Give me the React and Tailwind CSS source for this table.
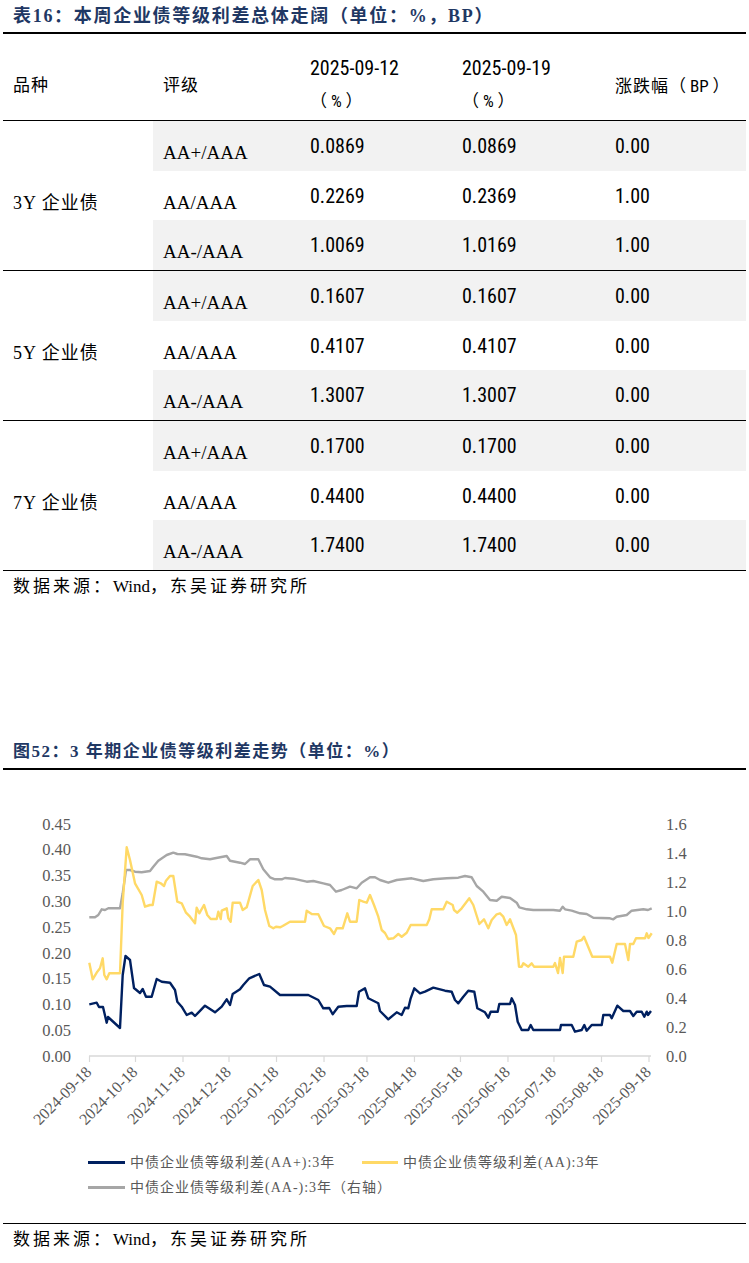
import React from "react";

const NAVY = "89.3,1004.3 96.7,1002.7 99,1007 103,1007 106.7,1022.7 108,1017 120,1028 122.7,975 125.5,956 130,960 134,988 140,993 142.7,989 146,996.7 151.7,996.7 156.7,979 161.7,981.7 170,982.7 175,990 177.3,1001.7 181.7,1006.7 186.7,1015 191.7,1012.7 195,1016 198.3,1012.7 205,1005.7 215,1012.3 221.7,1006.7 226.7,999.3 230,1005 232.7,994 240,989.3 243.3,985 249.3,978.3 259.3,974 264,985 270,986.7 280,995 308.3,995 318.3,1000 323.3,1008.3 329.3,1008 332.7,1014.3 338.3,1006.7 346.7,1006 356.7,1006 359,991.7 365,988.3 368.3,998.3 378.3,1003.3 380,1011 388.3,1019.3 396.7,1012.3 401.7,1015 405,1007.7 408.3,1008.3 410.7,998.3 414.3,988.3 420,993.3 425,991.7 433.3,987.7 445,990.7 451.7,991.7 455,1000 458.3,1003.3 463.3,996.7 468.3,990.7 474.3,991.7 477.3,1008.3 485,1012.3 488.3,1017.7 490.7,1011.7 497.7,1011.7 499.3,1004 510,1004 511.7,998.3 515,1005 517.7,1021.7 521.7,1030 528.3,1030 530.7,1025 533.3,1030 560,1030 561,1025 571.7,1025 575,1031.7 581.7,1030 584.3,1025 586.7,1030.7 591.7,1025 601.7,1025 603.3,1015 610,1015 611.7,1018.3 617.3,1005.7 623.3,1011 630,1011 633.3,1016 636.7,1011.7 641.7,1011.7 644.3,1016.7 646.7,1011.7 648,1015 651,1011";

const YELLOW = "89.3,962.7 92.7,979.3 97.3,971.7 100,968.3 102.7,958.3 104.3,975 106.7,979.3 109.3,973.3 120,973.3 122.7,903 126.7,847.3 130,860 135,883.3 141.7,895 145,906.7 150,905 152.7,905 156.7,881.7 160.7,883.3 164,886 166,880.7 170,876 173.3,876 177.3,901.7 181.7,903.3 186,912.7 190,916.7 195,923.3 196.7,907.7 199.3,913.3 204,905 207.3,915 210.7,919 216.7,919 218.3,911.7 220.7,919 221.7,910.7 226.7,908.3 228.3,918.3 230.7,921.7 232.7,902.7 240,902.7 242.7,910 246.7,907.3 252.7,886 258.3,880 261.7,890 265,910 269.3,926 273.3,928.3 276,926.7 280,927.3 282.7,926 290,921.7 305,921.7 306.7,910.7 311.7,914 318.3,914.3 324,926 330,928.3 334,934 336.7,928.3 342.7,928.3 347.3,913.3 350,921.7 356.7,921.7 359.3,900 363.3,901.7 366.7,902.7 370,895 374,905 378.3,916.7 381.7,930 385,933 388.3,939 393.3,938.3 398.3,934 401.7,936.7 406.7,932.7 410.7,925 426.7,925 429.3,919.3 431.7,909.3 443.3,909.3 446.7,901.7 452.7,905 454,910 457.3,912.7 461.7,908.3 469.3,898.3 473.3,905 479.3,924 484,919.3 488.3,928.3 491.7,920 496.7,914.3 500,913.3 503.3,916.7 506.7,925 510,919.3 516,935 519,966.7 521.7,966.7 523.3,963.3 528.3,966.7 531.7,963.3 534,966.7 553.3,966.7 555,963 558,973 560,958 562.7,973 564,956.7 573.3,956.7 576.7,941.7 581.7,940 584,936.7 586.7,943.3 592.3,956.7 610,956.7 612.3,962.7 616.7,944 625,944 628.3,960 630,944 633.3,944 636,938.3 645,938.3 646.7,933.3 648.5,938 651.7,933.3";

const GRAY = "89.3,917.3 95,917.3 98.3,915 101.7,909.3 105,910 108.3,908.3 120,908.3 122.7,893.3 126,870 130,870 135,871.7 141.7,872.3 150,871 153.3,866.7 158.3,860.7 166.7,855 173.3,852.7 177.3,854 185,854.3 196.7,856.7 201.7,858.3 210,859.3 215,858.3 226.7,856 230,860.7 240,862.7 245,864 250,859.3 258.3,859.3 263.3,869.3 270,877.3 275,879.3 281.7,879.3 285,878 293.3,878.7 306.7,881.7 313.3,881 323.3,883.3 330,885 336,891.7 341.7,890 350,886.7 356.7,888.3 361.7,882.7 370,877.3 375,877.3 380,880 388.3,882.7 396.7,880 411.7,878.3 423.3,881 433.3,879.3 446.7,878.3 458.3,877.7 465,876 471.7,877.3 476.7,886 483.3,891.7 490,900 496.7,900.7 501.7,896.7 510,898 516.7,902.7 519.3,907.3 526.7,909.3 533.3,910 553.3,910 560,910.7 562.7,906.7 565,909.3 571.7,910.7 580,913.3 586.7,914 593.3,917.7 610,918.3 613.3,919.3 616.7,916.7 626.7,915 631.7,910.7 643.3,909.3 648,910 651.7,908.3";

const DATES = [
  ["2024-09-18", 0], ["2024-10-18", 30], ["2024-11-18", 61], ["2024-12-18", 91],
  ["2025-01-18", 122], ["2025-02-18", 153], ["2025-03-18", 181], ["2025-04-18", 212],
  ["2025-05-18", 242], ["2025-06-18", 273], ["2025-07-18", 303], ["2025-08-18", 334],
  ["2025-09-18", 365],
];

const LEFT_TICKS = ["0.45", "0.40", "0.35", "0.30", "0.25", "0.20", "0.15", "0.10", "0.05", "0.00"];
const RIGHT_TICKS = ["1.6", "1.4", "1.2", "1.0", "0.8", "0.6", "0.4", "0.2", "0.0"];

const GROUPS = [
  {
    label: "3Y 企业债",
    rows: [
      ["AA+/AAA", "0.0869", "0.0869", "0.00"],
      ["AA/AAA", "0.2269", "0.2369", "1.00"],
      ["AA-/AAA", "1.0069", "1.0169", "1.00"],
    ],
  },
  {
    label: "5Y 企业债",
    rows: [
      ["AA+/AAA", "0.1607", "0.1607", "0.00"],
      ["AA/AAA", "0.4107", "0.4107", "0.00"],
      ["AA-/AAA", "1.3007", "1.3007", "0.00"],
    ],
  },
  {
    label: "7Y 企业债",
    rows: [
      ["AA+/AAA", "0.1700", "0.1700", "0.00"],
      ["AA/AAA", "0.4400", "0.4400", "0.00"],
      ["AA-/AAA", "1.7400", "1.7400", "0.00"],
    ],
  },
];

function Row({ r, shaded }) {
  const cls = shaded ? "flex h-[50px] bg-[#f2f2f2]" : "flex h-[49px]";
  return (
    <div className={cls}>
      <div className="w-[147px] pl-[10px] pt-[14px] flex items-center text-[19px] leading-[20px] font-['Liberation_Serif',serif]">
        {r[0]}
      </div>
      <div className="w-[152px] pl-[10px] flex items-center text-[20px] leading-[20px] font-['Liberation_Sans_Narrow','Roboto_Condensed',Roboto,sans-serif]">
        {r[1]}
      </div>
      <div className="w-[153px] pl-[10px] flex items-center text-[20px] leading-[20px] font-['Liberation_Sans_Narrow','Roboto_Condensed',Roboto,sans-serif]">
        {r[2]}
      </div>
      <div className="flex-1 pl-[10px] flex items-center text-[20px] leading-[20px] font-['Liberation_Sans_Narrow','Roboto_Condensed',Roboto,sans-serif]">
        {r[3]}
      </div>
    </div>
  );
}

function Group({ g }) {
  return (
    <div className="mx-[3px] flex border-b border-black">
      <div className="w-[150px] pl-[10px] pt-[15px] flex items-center text-[18px] leading-[20px] tracking-[1px] font-['Liberation_Serif','Noto_Sans_CJK_SC',serif]">
        {g.label}
      </div>
      <div className="flex-1 flex flex-col">
        <Row r={g.rows[0]} shaded />
        <Row r={g.rows[1]} />
        <Row r={g.rows[2]} shaded />
      </div>
    </div>
  );
}

function Source({ h }) {
  return (
    <div className={h}>
      数据来源：<span className="tracking-normal">Wind</span>，东吴证券研究所
    </div>
  );
}

function Chart() {
  const x0 = 89.5;
  const k = 559.5 / 365;
  return (
    <svg width="749" height="380" viewBox="0 770 749 380" className="block">
      {LEFT_TICKS.map((t, i) => (
        <text
          key={t}
          x="71"
          y={824 + i * 25.78 + 5.6}
          textAnchor="end"
          fontSize="16.5"
          fill="#595959"
          fontFamily="'Liberation Serif', serif"
        >
          {t}
        </text>
      ))}
      {RIGHT_TICKS.map((t, i) => (
        <text
          key={t}
          x="666"
          y={824 + i * 29 + 5.6}
          textAnchor="start"
          fontSize="16.5"
          fill="#595959"
          fontFamily="'Liberation Serif', serif"
        >
          {t}
        </text>
      ))}
      <line x1="89" y1="1056" x2="651" y2="1056" stroke="#d9d9d9" strokeWidth="1.5" />
      {DATES.map(([d, n]) => {
        const x = x0 + n * k;
        return (
          <g key={d}>
            <line x1={x} y1="1056" x2={x} y2="1062" stroke="#d9d9d9" strokeWidth="1.2" />
            <text
              x={x + 3}
              y="1073"
              textAnchor="end"
              fontSize="16"
              fill="#595959"
              fontFamily="'Liberation Serif', serif"
              transform={`rotate(-45 ${x + 3} 1073)`}
            >
              {d}
            </text>
          </g>
        );
      })}
      <polyline points={GRAY} fill="none" stroke="#a6a6a6" strokeWidth="2.4" strokeLinejoin="round" />
      <polyline points={YELLOW} fill="none" stroke="#ffd966" strokeWidth="2.4" strokeLinejoin="round" />
      <polyline points={NAVY} fill="none" stroke="#002060" strokeWidth="2.4" strokeLinejoin="round" />
    </svg>
  );
}

export default function App() {
  return (
    <div className="w-[749px] h-[1263px] bg-white overflow-hidden text-black">
      <div className="h-[32px] flex items-center pl-[13px] text-[18px] font-bold text-[#1f3864] tracking-[1.7px] font-['Liberation_Serif','Noto_Sans_CJK_SC',serif]">
        表16：本周企业债等级利差总体走阔（单位：%，BP）
      </div>
      <div className="mx-[3px] h-[2px] bg-black" />

      <div className="mx-[3px] flex h-[87px] border-b border-black text-[17px] leading-[20px] font-['Liberation_Sans_Narrow','Roboto_Condensed','Noto_Sans_CJK_SC',sans-serif]">
        <div className="w-[150px] pl-[10px] pt-[40px] tracking-[1px] font-['Noto_Sans_CJK_SC',sans-serif]">品种</div>
        <div className="w-[147px] pl-[10px] pt-[40px] tracking-[1px] font-['Noto_Sans_CJK_SC',sans-serif]">评级</div>
        <div className="w-[152px] pl-[10px] pt-[24px] flex flex-col">
          <span className="text-[20px]">2025-09-12</span>
          <span className="mt-[13px] whitespace-pre">（ % ）</span>
        </div>
        <div className="w-[153px] pl-[10px] pt-[24px] flex flex-col">
          <span className="text-[20px]">2025-09-19</span>
          <span className="mt-[13px] whitespace-pre">（ % ）</span>
        </div>
        <div className="flex-1 pl-[10px] pt-[41px] whitespace-pre">
          <span className="tracking-[1px] font-['Noto_Sans_CJK_SC',sans-serif]">涨跌幅</span>（ BP ）
        </div>
      </div>

      {GROUPS.map((g) => (
        <Group key={g.label} g={g} />
      ))}

      <Source h="h-[31px] flex items-center pl-[13px] text-[17px] tracking-[3px] font-['Liberation_Serif','Noto_Sans_CJK_SC',serif]" />

      <div className="h-[134px]" />

      <div className="h-[32px] flex items-center pl-[13px] text-[17px] font-bold text-[#1f3864] tracking-[1.5px] font-['Liberation_Serif','Noto_Sans_CJK_SC',serif]">
        图52：3 年期企业债等级利差走势（单位：%）
      </div>
      <div className="mx-[3px] h-[2px] bg-black" />

      <Chart />

      <div className="h-[50px] pl-[88px] text-[14px] tracking-[1px] text-[#595959] font-['Liberation_Serif','Noto_Sans_CJK_SC',serif]">
        <div className="flex h-[25px] items-center">
          <span className="w-[37px] h-[3px] bg-[#002060] shrink-0" />
          <span className="ml-[5px] w-[232px] shrink-0 whitespace-nowrap">中债企业债等级利差(AA+):3年</span>
          <span className="w-[36px] h-[3px] bg-[#ffd966] shrink-0" />
          <span className="ml-[5px] whitespace-nowrap">中债企业债等级利差(AA):3年</span>
        </div>
        <div className="flex h-[25px] items-center">
          <span className="w-[37px] h-[3px] bg-[#a6a6a6] shrink-0" />
          <span className="ml-[5px] whitespace-nowrap">中债企业债等级利差(AA-):3年（右轴）</span>
        </div>
      </div>

      <div className="h-[23px]" />
      <div className="mx-[3px] h-[1px] bg-black" />
      <Source h="h-[32px] flex items-center pl-[13px] text-[17px] tracking-[3px] font-['Liberation_Serif','Noto_Sans_CJK_SC',serif]" />
    </div>
  );
}
